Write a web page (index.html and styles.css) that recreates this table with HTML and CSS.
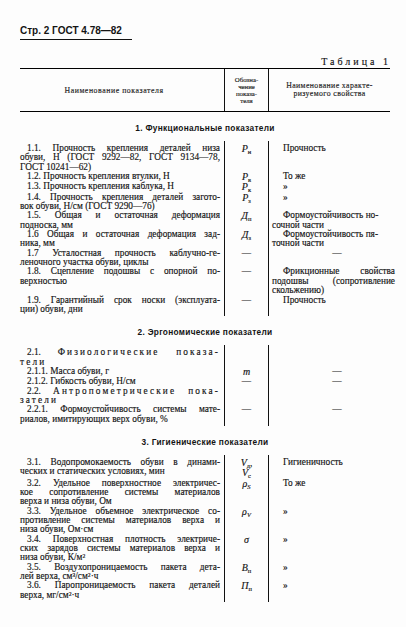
FILE: index.html
```html
<!DOCTYPE html>
<html lang="ru">
<head>
<meta charset="utf-8">
<title>ГОСТ 4.78—82, стр. 2</title>
<link rel="stylesheet" href="styles.css">
</head>
<body>
<div class="page">
  <div class="runhead">Стр. 2 ГОСТ 4.78—82</div>
  <div class="caption">Таблица 1</div>

  <div class="table">
    <div class="thead">
      <div class="h-name">Наименование показателя</div>
      <div class="h-sym">Обозна-<br>чение<br>показа-<br>теля</div>
      <div class="h-prop">Наименование характе-<br>ризуемого свойства</div>
    </div>

    <div class="sec-title">1. Функциональные показатели</div>
    <div class="sec">
      <div class="row">
        <div class="n"><span>1.1. Прочность крепления деталей низа</span><span>обуви, Н (ГОСТ 9292—82, ГОСТ 9134—78,</span><span>ГОСТ 10241—62)</span></div>
        <div class="s"><i>P</i><sub>н</sub></div>
        <div class="p"><span>Прочность</span></div>
      </div>
      <div class="row">
        <div class="n"><span>1.2. Прочность крепления втулки, Н</span></div>
        <div class="s"><i>P</i><sub>в</sub></div>
        <div class="p"><span>То же</span></div>
      </div>
      <div class="row">
        <div class="n"><span>1.3. Прочность крепления каблука, Н</span></div>
        <div class="s"><i>P</i><sub>к</sub></div>
        <div class="p"><span>»</span></div>
      </div>
      <div class="row">
        <div class="n"><span>1.4. Прочность крепления деталей загото-</span><span>вок обуви, Н/см (ГОСТ 9290—76)</span></div>
        <div class="s"><i>P</i><sub>з</sub></div>
        <div class="p"><span>»</span></div>
      </div>
      <div class="row">
        <div class="n"><span>1.5. Общая и остаточная деформация</span><span>подноска, мм</span></div>
        <div class="s"><i>Д</i><sub>п</sub></div>
        <div class="p"><span>Формоустойчивость но-</span><span>сочной части</span></div>
      </div>
      <div class="row">
        <div class="n"><span>1.6 Общая и остаточная деформация зад-</span><span>ника, мм</span></div>
        <div class="s"><i>Д</i><sub>з</sub></div>
        <div class="p"><span>Формоустойчивость пя-</span><span>точной части</span></div>
      </div>
      <div class="row">
        <div class="n"><span>1.7 Усталостная прочность каблучно-ге-</span><span>леночного участка обуви, циклы</span></div>
        <div class="s">—</div>
        <div class="p"><span class="c">—</span></div>
      </div>
      <div class="row">
        <div class="n"><span>1.8. Сцепление подошвы с опорной по-</span><span>верхностью</span></div>
        <div class="s">—</div>
        <div class="p"><span class="j">Фрикционные свойства</span><span class="j">подошвы (сопротивление</span><span>скольжению)</span></div>
      </div>
      <div class="row">
        <div class="n"><span>1.9. Гарантийный срок носки (эксплуата-</span><span>ции) обуви, дни</span></div>
        <div class="s">—</div>
        <div class="p"><span>Прочность</span></div>
      </div>
    </div>

    <div class="sec-title">2. Эргономические показатели</div>
    <div class="sec">
      <div class="row">
        <div class="n"><span>2.1. <b class="sp">Физиологические</b> <b class="sp">показа-</b></span><span><b class="sp">тели</b></span></div>
        <div class="s"></div>
        <div class="p"></div>
      </div>
      <div class="row">
        <div class="n"><span>2.1.1. Масса обуви, г</span></div>
        <div class="s"><i>m</i></div>
        <div class="p"><span class="c">—</span></div>
      </div>
      <div class="row">
        <div class="n"><span>2.1.2. Гибкость обуви, Н/см</span></div>
        <div class="s">—</div>
        <div class="p"><span class="c">—</span></div>
      </div>
      <div class="row">
        <div class="n"><span>2.2. <b class="sp">Антропометрические</b> <b class="sp">пока-</b></span><span><b class="sp">затели</b></span></div>
        <div class="s"></div>
        <div class="p"></div>
      </div>
      <div class="row">
        <div class="n"><span>2.2.1. Формоустойчивость системы мате-</span><span>риалов, имитирующих верх обуви, %</span></div>
        <div class="s">—</div>
        <div class="p"><span class="c">—</span></div>
      </div>
    </div>

    <div class="sec-title">3. Гигиенические показатели</div>
    <div class="sec sec3">
      <div class="row">
        <div class="n"><span>3.1. Водопромокаемость обуви в динами-</span><span>ческих и статических условиях, мин</span></div>
        <div class="s"><span><i>V</i><sub>д</sub>,</span><br><span><i>V</i><sub>с</sub></span></div>
        <div class="p"><span>Гигиеничность</span></div>
      </div>
      <div class="row">
        <div class="n"><span>3.2. Удельное поверхностное электричес-</span><span>кое сопротивление системы материалов</span><span>верха и низа обуви, Ом</span></div>
        <div class="s"><i>ρ</i><sub class="it">S</sub></div>
        <div class="p"><span>То же</span></div>
      </div>
      <div class="row">
        <div class="n"><span>3.3. Удельное объемное электрическое со-</span><span>противление системы материалов верха и</span><span>низа обуви, Ом·см</span></div>
        <div class="s"><i>ρ</i><sub class="it">V</sub></div>
        <div class="p"><span class="q">»</span></div>
      </div>
      <div class="row">
        <div class="n"><span>3.4. Поверхностная плотность электриче-</span><span>ских зарядов системы материалов верха и</span><span>низа обуви, К/м²</span></div>
        <div class="s"><i>σ</i></div>
        <div class="p"><span class="q">»</span></div>
      </div>
      <div class="row">
        <div class="n"><span>3.5. Воздухопроницаемость пакета дета-</span><span>лей верха, см³/см²·ч</span></div>
        <div class="s"><i>B</i><sub>п</sub></div>
        <div class="p"><span class="q">»</span></div>
      </div>
      <div class="row">
        <div class="n"><span>3.6. Паропроницаемость пакета деталей</span><span>верха, мг/см²·ч</span></div>
        <div class="s"><i>П</i><sub>п</sub></div>
        <div class="p"><span class="q">»</span></div>
      </div>
    </div>
  </div>
</div>
</body>
</html>
```

FILE: styles.css
```css
html, body {
  margin: 0;
  padding: 0;
  background: #fdfdfd;
}

body {
  color: #141414;
  font-family: "Liberation Serif", "Times New Roman", serif;
  -webkit-text-stroke: 0.15px #141414;
}

.page {
  width: 375px;
  padding: 25px 0 0 20px;
}

.runhead {
  display: block;
  width: 112px;
  padding-bottom: 2px;
  border-bottom: 1px solid #111;
  font-family: "Liberation Sans", Arial, sans-serif;
  font-weight: bold;
  font-size: 10px;
  line-height: 12px;
  white-space: nowrap;
  -webkit-text-stroke: 0;
}

.caption {
  margin: 16px 4px 0 0;
  text-align: right;
  font-size: 10px;
  line-height: 12px;
  letter-spacing: 3px;
}

.thead {
  display: grid;
  grid-template-columns: 204px 45px 1fr;
  height: 42px;
  margin-right: 5px;
  border-top: 1px solid #000;
  border-bottom: 1px solid #000;
  align-items: center;
  color: #2a2a2a;
}

.h-name {
  padding-right: 16px;
  text-align: center;
  font-size: 7.8px;
  letter-spacing: 0.55px;
}

.h-sym {
  align-self: stretch;
  display: flex;
  flex-direction: column;
  justify-content: center;
  border-left: 1px solid #111;
  border-right: 1px solid #111;
  text-align: center;
  font-size: 6.8px;
  line-height: 7px;
}

.h-prop {
  text-align: center;
  font-size: 7.8px;
  line-height: 7.8px;
  letter-spacing: 0.4px;
}

.sec-title {
  padding: 11px 5px 8px 0;
  text-align: center;
  font-family: "Liberation Sans", Arial, sans-serif;
  font-weight: bold;
  font-size: 8.3px;
  line-height: 10px;
  letter-spacing: 0.3px;
  -webkit-text-stroke: 0;
}

.row {
  display: grid;
  grid-template-columns: 204px 45px 1fr;
  font-size: 9.3px;
  line-height: 9.35px;
}

.sec > .row:first-child > * {
  padding-top: 3px;
}

.sec > .row:last-child > * {
  padding-bottom: 2px;
}

.n {
  padding-right: 4px;
}

.n > span {
  display: block;
  white-space: nowrap;
  text-align: justify;
  text-align-last: justify;
}

.n > span:first-child {
  text-indent: 7px;
}

.n > span:last-child {
  text-align-last: left;
}

.sp {
  font-weight: normal;
  letter-spacing: 2.1px;
}

.s {
  border-left: 1px solid #111;
  border-right: 1px solid #111;
  text-align: center;
}

.s i {
  font-size: 10px;
}

sub {
  font-size: 6.5px;
  line-height: 0;
  vertical-align: -2px;
}

sub.it {
  font-style: italic;
}

.p {
  padding-left: 3px;
}

.p > span {
  display: block;
  white-space: nowrap;
}

.p > span:first-child {
  text-indent: 11px;
}

.p > .j {
  text-align: justify;
  text-align-last: justify;
}

.p > .c {
  text-indent: 0;
  text-align: center;
  padding-right: 4px;
}

.p > .q {
  text-indent: 18px;
}
```
